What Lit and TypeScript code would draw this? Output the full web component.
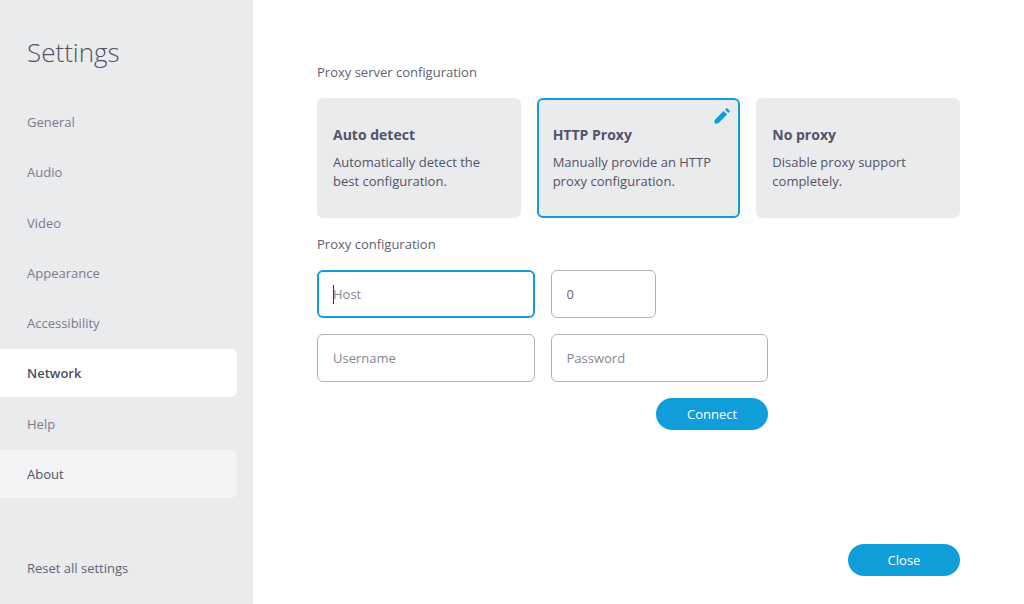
import { LitElement, html, css } from "lit";
import { customElement, state, query } from "lit/decorators.js";
import { classMap } from "lit/directives/class-map.js";

interface ProxyMode {
  id: string;
  title: string;
  text: string;
  editable?: boolean;
}

const SECTIONS = ["General", "Audio", "Video", "Appearance", "Accessibility", "Network", "Help", "About"];

const MODES: ProxyMode[] = [
  { id: "auto", title: "Auto detect", text: "Automatically detect the best configuration." },
  { id: "http", title: "HTTP Proxy", text: "Manually provide an HTTP proxy configuration.", editable: true },
  { id: "none", title: "No proxy", text: "Disable proxy support completely." },
];

@customElement("settings-nav")
export class SettingsNav extends LitElement {
  static styles = css`
    :host {
      display: flex;
      flex-direction: column;
      box-sizing: border-box;
      background: #e9ebec;
      color: #535368;
      padding: 32px 16px 22px 0;
    }
    .title {
      margin: 0 0 26px;
      padding-left: 27px;
      font-size: 26px;
      font-weight: 300;
      line-height: 40px;
    }
    .list {
      display: flex;
      flex: 1 1 auto;
      flex-direction: column;
      justify-content: space-between;
      max-height: 400px;
    }
    .item {
      height: 48px;
      padding-left: 27px;
      border-radius: 0 6px 6px 0;
      color: #7b7b8c;
      line-height: 48px;
      text-decoration: none;
    }
    .item.hover,
    .item:hover {
      background: #f2f4f6;
      color: #535368;
    }
    .item.current {
      background: #fff;
      color: #4c4c62;
      font-weight: 600;
    }
    .reset {
      align-self: flex-start;
      margin: auto 0 0 27px;
      padding: 0;
      border: 0;
      background: none;
      color: #64647a;
      font: inherit;
      line-height: 28px;
      cursor: pointer;
    }
  `;

  @state() private current = "Network";
  @state() private pointed = "About";

  private open(event: Event, name: string) {
    event.preventDefault();
    this.current = name;
  }

  render() {
    return html`
      <h1 class="title">Settings</h1>
      <nav class="list" aria-label="Settings sections" @mouseleave=${() => (this.pointed = "")}>
        ${SECTIONS.map(
          (name) => html`<a
            class=${classMap({ item: true, current: name === this.current, hover: name === this.pointed })}
            href="#${name.toLowerCase()}"
            aria-current=${name === this.current ? "page" : "false"}
            @click=${(e: Event) => this.open(e, name)}
            @mouseenter=${() => (this.pointed = name)}
            >${name}</a
          >`
        )}
      </nav>
      <button class="reset" type="button">Reset all settings</button>
    `;
  }
}

@customElement("network-panel")
export class NetworkPanel extends LitElement {
  static styles = css`
    :host {
      display: flex;
      flex-direction: column;
      box-sizing: border-box;
      padding: 62px 64px 28px;
      color: #535368;
    }
    .heading {
      margin: 0 0 16px;
      padding: 0;
      color: #5f5f73;
      font-size: 13px;
      font-weight: 400;
      line-height: 20px;
    }
    .group {
      margin: 0 0 16px;
      padding: 0;
      border: 0;
      min-width: 0;
    }
    .cards {
      display: grid;
      grid-template-columns: repeat(3, 1fr);
      gap: 16px;
    }
    .card {
      position: relative;
      display: flex;
      flex-direction: column;
      justify-content: center;
      box-sizing: border-box;
      min-height: 120px;
      padding: 14px;
      border: 2px solid #e9ebec;
      border-radius: 6px;
      background: #e9ebec;
      cursor: pointer;
    }
    .card.chosen {
      border-color: #109edb;
    }
    .radio {
      appearance: none;
      width: 0;
      height: 0;
      margin: 0;
      outline: none;
    }
    .name {
      font-size: 14px;
      font-weight: 700;
      line-height: 20px;
      margin-bottom: 8px;
    }
    .text {
      line-height: 19px;
    }
    .edit {
      position: absolute;
      top: 6px;
      right: 6px;
      display: grid;
      padding: 0;
      border: 0;
      background: none;
      color: #109edb;
      cursor: pointer;
    }
    .fields {
      display: grid;
      grid-template-columns: 1fr 1fr;
      gap: 16px;
      max-width: 451px;
    }
    .label {
      display: grid;
    }
    .label.short {
      width: 105px;
    }
    .input {
      box-sizing: border-box;
      width: 100%;
      height: 48px;
      padding: 0 15px;
      border: 1px solid #b2b2b2;
      border-radius: 6px;
      outline: none;
      background: #fff;
      color: #64647a;
      caret-color: #333348;
      font: inherit;
    }
    .input::placeholder {
      color: #85858f;
      opacity: 1;
    }
    .input:focus {
      padding: 0 14px;
      border: 2px solid #109edb;
    }
    /* An empty focused field keeps a steady caret instead of a blinking one. */
    .input:focus:placeholder-shown {
      background: linear-gradient(#333348, #333348) 14px center / 1px 19px no-repeat #fff;
      caret-color: transparent;
    }
    .button {
      min-width: 112px;
      height: 32px;
      padding: 0 24px;
      border: 0;
      border-radius: 16px;
      background: #109edb;
      color: #fff;
      font: inherit;
      cursor: pointer;
    }
    .connect {
      grid-column: 2;
      justify-self: end;
    }
    .footer {
      display: flex;
      justify-content: flex-end;
      margin-top: auto;
    }
  `;

  @state() private mode = "http";
  @query("#host") private hostField!: HTMLInputElement;

  firstUpdated() {
    this.hostField.focus();
  }

  private card(mode: ProxyMode) {
    const chosen = mode.id === this.mode;
    return html`
      <label class=${classMap({ card: true, chosen })}>
        <input
          class="radio"
          type="radio"
          name="mode"
          .value=${mode.id}
          .checked=${chosen}
          @change=${() => (this.mode = mode.id)}
        />
        <span class="name">${mode.title}</span>
        <span class="text">${mode.text}</span>
        ${mode.editable
          ? html`<button class="edit" type="button" aria-label="Edit">
              <svg width="20" height="20" viewBox="0 0 20 20" fill="currentColor" aria-hidden="true">
                <path
                  d="M11.6 4.9 15.1 8.4 6.6 16.9Q6.2 17.3 5.6 17.4L3.2 17.6Q2.3 17.6 2.4 16.7L2.6 14.4Q2.7 13.8 3.1 13.4Z"
                />
                <path
                  d="M12.9 3.6 14 2.6Q14.8 1.9 15.6 2.6L17.4 4.4Q18.1 5.2 17.4 6L16.4 7.1Z"
                />
              </svg>
            </button>`
          : ""}
      </label>
    `;
  }

  render() {
    return html`
      <fieldset class="group">
        <legend class="heading">Proxy server configuration</legend>
        <div class="cards">${MODES.map((mode) => this.card(mode))}</div>
      </fieldset>
      <h2 class="heading">Proxy configuration</h2>
      <form class="fields" @submit=${(e: Event) => e.preventDefault()}>
        <label class="label" for="host"
          ><input class="input" id="host" type="text" placeholder="Host" aria-label="Host"
        /></label>
        <label class="label short" for="port"
          ><input class="input" id="port" type="text" inputmode="numeric" value="0" aria-label="Port"
        /></label>
        <label class="label" for="user"
          ><input class="input" id="user" type="text" placeholder="Username" aria-label="Username"
        /></label>
        <label class="label" for="pass"
          ><input class="input" id="pass" type="password" placeholder="Password" aria-label="Password"
        /></label>
        <button class="button connect" type="submit">Connect</button>
      </form>
      <div class="footer"><button class="button" type="button">Close</button></div>
    `;
  }
}

@customElement("app-root")
export class AppRoot extends LitElement {
  static styles = css`
    :host {
      display: grid;
      grid-template-columns: 253px minmax(0, 1fr);
      min-height: 100vh;
      background: #fff;
      font-family: "Open Sans", "Noto Sans", sans-serif;
      font-size: 13px;
    }
  `;

  render() {
    return html`<settings-nav></settings-nav><network-panel></network-panel>`;
  }
}
